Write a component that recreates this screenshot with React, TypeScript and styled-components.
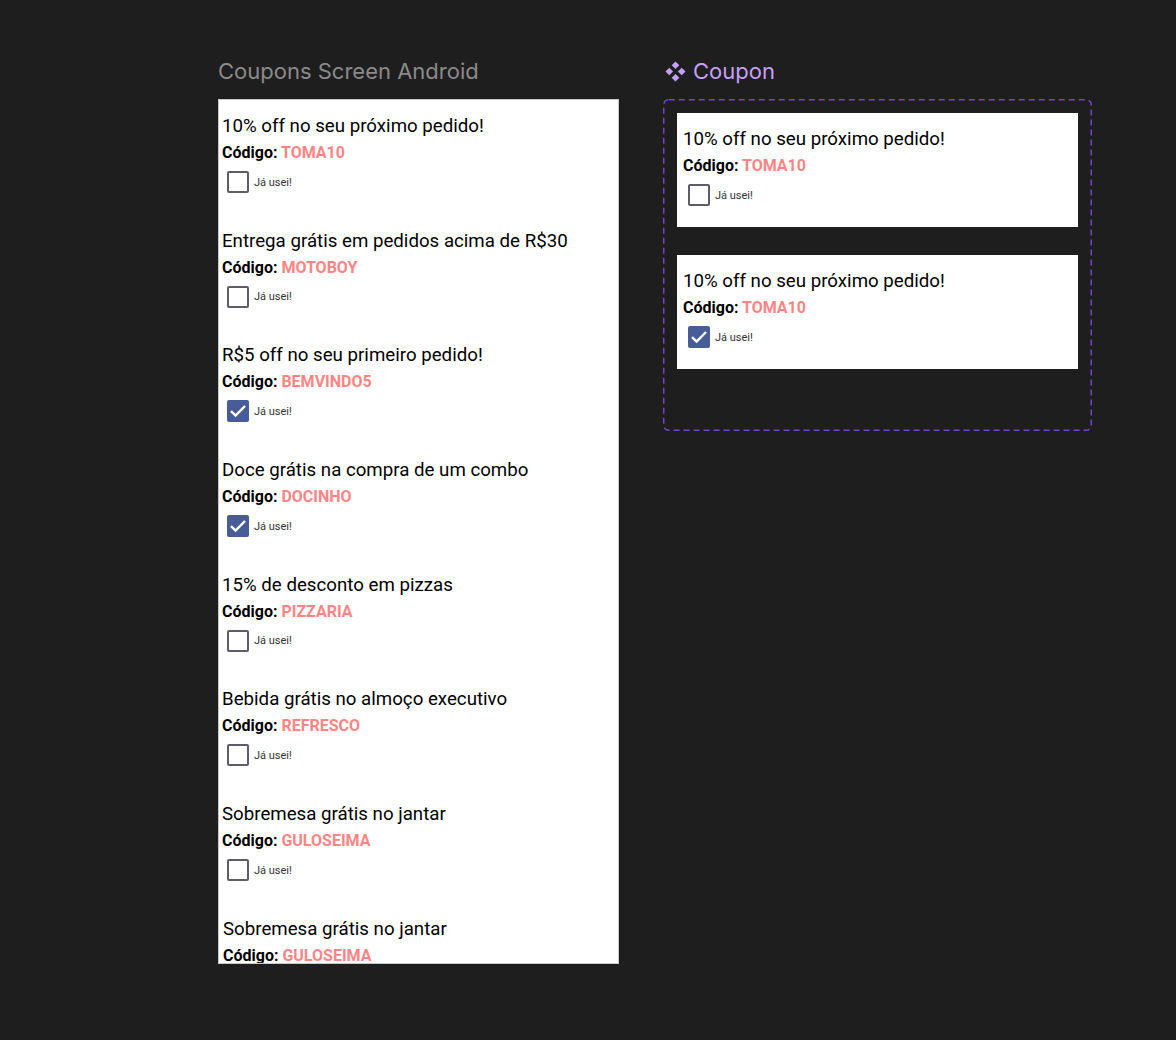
import React from "react";
import styled, { createGlobalStyle } from "styled-components";

const Global = createGlobalStyle`
  html, body { margin: 0; padding: 0; background: #1e1e1e; }
  body { width: 1176px; height: 1040px; overflow: hidden; }
`;

const Page = styled.div`
  display: flex;
  gap: 44px;
  padding: 58px 0 0 218px;
  box-sizing: border-box;
  width: 1176px;
  height: 1040px;
  background: #1e1e1e;
`;

const Column = styled.div`
  display: flex;
  flex-direction: column;
  gap: 15px;
`;

const FrameTitle = styled.div<{ $accent?: boolean }>`
  display: flex;
  align-items: center;
  gap: 7px;
  height: 26px;
  font-family: Inter, "Noto Sans", sans-serif;
  font-size: 22px;
  line-height: 26px;
  color: ${(p) => (p.$accent ? "#c4a0fb" : "#8a8a8a")};
  margin-left: ${(p) => (p.$accent ? "2px" : "0")};
`;

const Screen = styled.div`
  width: 401px;
  height: 865px;
  background: #fff;
  box-sizing: border-box;
  border: 1px solid #c8c8c8;
  overflow: hidden;
  display: flex;
  flex-direction: column;
`;

const dashed = encodeURIComponent(
  `<svg xmlns="http://www.w3.org/2000/svg" width="429" height="332"><rect x="0.75" y="0.75" width="427.5" height="330.5" rx="5" ry="5" fill="none" stroke="#7443c9" stroke-width="1.5" stroke-dasharray="6 4"/></svg>`
);

const ComponentSet = styled.div`
  width: 429px;
  height: 332px;
  box-sizing: border-box;
  background-image: url("data:image/svg+xml,${dashed}");
  background-repeat: no-repeat;
  padding: 14px;
  display: flex;
  flex-direction: column;
  gap: 28px;
`;

const Card = styled.div<{ $padX: number; $height: number }>`
  flex: none;
  width: 401px;
  height: ${(p) => p.$height}px;
  box-sizing: border-box;
  background: #fff;
  padding: 16px ${(p) => p.$padX}px 0;
  display: flex;
  flex-direction: column;
  font-family: Roboto, "Noto Sans", sans-serif;
`;

const Title = styled.div`
  font-size: 18.7px;
  line-height: 21px;
  color: #000;
  white-space: nowrap;
`;

const Code = styled.div`
  margin-top: 5px;
  font-size: 16px;
  line-height: 21px;
  font-weight: 700;
  color: #000;
  white-space: nowrap;
`;

const CodeValue = styled.span`
  color: #ff8585;
`;

const CheckRow = styled.label`
  margin-top: 8px;
  margin-left: 5px;
  display: flex;
  align-items: center;
  gap: 5px;
  height: 22px;
`;

const Box = styled.span<{ $checked: boolean }>`
  width: 22px;
  height: 22px;
  box-sizing: border-box;
  border-radius: 2px;
  border: 2px solid ${(p) => (p.$checked ? "#485d98" : "#5d5d69")};
  background: ${(p) => (p.$checked ? "#485d98" : "#fff")};
  display: flex;
  align-items: center;
  justify-content: center;
`;

const Label = styled.span`
  font-size: 11px;
  line-height: 13px;
  color: #333;
`;

const ComponentIcon = () => (
  <svg width="21" height="21" viewBox="0 0 21 21">
    <g fill="#c4a0fb">
      <path d="M10.5 0.5 L14.3 4.3 L10.5 8.1 L6.7 4.3 Z" />
      <path d="M4.3 6.7 L8.1 10.5 L4.3 14.3 L0.5 10.5 Z" />
      <path d="M16.7 6.7 L20.5 10.5 L16.7 14.3 L12.9 10.5 Z" />
      <path d="M10.5 12.9 L14.3 16.7 L10.5 20.5 L6.7 16.7 Z" />
    </g>
  </svg>
);

const Check = () => (
  <svg width="18" height="18" viewBox="0 0 18 18">
    <path d="M2 9.2 L6.6 13.6 L16 4" fill="none" stroke="#fff" strokeWidth="2.4" />
  </svg>
);

type CouponData = { title: string; code: string; used: boolean };

const Coupon: React.FC<CouponData & { padX: number; height: number }> = ({ title, code, used, padX, height }) => (
  <Card $padX={padX} $height={height}>
    <Title>{title}</Title>
    <Code>
      Código: <CodeValue>{code}</CodeValue>
    </Code>
    <CheckRow>
      <Box $checked={used}>{used && <Check />}</Box>
      <Label>Já usei!</Label>
    </CheckRow>
  </Card>
);

const coupons: CouponData[] = [
  { title: "10% off no seu próximo pedido!", code: "TOMA10", used: false },
  { title: "Entrega grátis em pedidos acima de R$30", code: "MOTOBOY", used: false },
  { title: "R$5 off no seu primeiro pedido!", code: "BEMVINDO5", used: true },
  { title: "Doce grátis na compra de um combo", code: "DOCINHO", used: true },
  { title: "15% de desconto em pizzas", code: "PIZZARIA", used: false },
  { title: "Bebida grátis no almoço executivo", code: "REFRESCO", used: false },
  { title: "Sobremesa grátis no jantar", code: "GULOSEIMA", used: false },
  { title: "Sobremesa grátis no jantar", code: "GULOSEIMA", used: false },
];

export default function App() {
  return (
    <>
      <Global />
      <Page>
        <Column>
          <FrameTitle>Coupons Screen Android</FrameTitle>
          <Screen>
            {coupons.map((c, i) => (
              <Coupon key={i} {...c} padX={i === 7 ? 4 : 3} height={114.7} />
            ))}
          </Screen>
        </Column>
        <Column>
          <FrameTitle $accent>
            <ComponentIcon />
            Coupon
          </FrameTitle>
          <ComponentSet>
            <Coupon title="10% off no seu próximo pedido!" code="TOMA10" used={false} padX={6} height={114} />
            <Coupon title="10% off no seu próximo pedido!" code="TOMA10" used={true} padX={6} height={114} />
          </ComponentSet>
        </Column>
      </Page>
    </>
  );
}
